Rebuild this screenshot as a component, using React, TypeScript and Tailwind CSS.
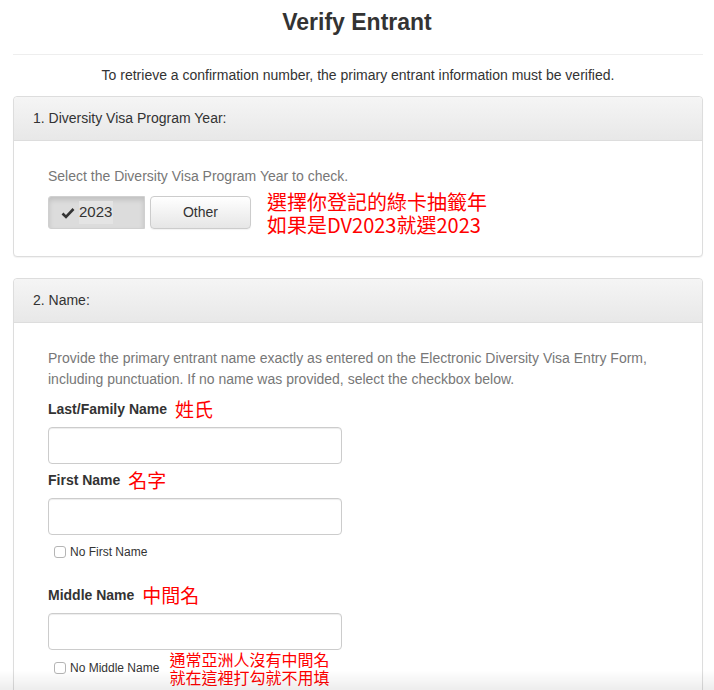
const sans = "font-['Liberation_Sans','Noto_Sans_CJK_TC',Arial,sans-serif]"
const cjk = "font-['Noto_Sans_CJK_TC','Liberation_Sans',sans-serif] text-[#ff0000]"

function Panel({ title, children }: { title: string; children: React.ReactNode }) {
  return (
    <div className="rounded-[4px] border border-[#dddddd] bg-white shadow-[0_1px_1px_rgba(0,0,0,0.05)]">
      <div className="flex h-[44px] items-center rounded-t-[4px] border-b border-[#dddddd] bg-gradient-to-b from-[#f5f5f5] to-[#e8e8e8] pl-[19px] text-[14px] text-[#333333]">
        {title}
      </div>
      {children}
    </div>
  )
}

function Field({ label, note }: { label: string; note: string }) {
  return (
    <>
      <div className="flex h-[24px] items-center gap-[8px]">
        <span className="text-[14px] font-bold text-[#333333]">{label}</span>
        <span className={`${cjk} text-[19px] leading-[24px]`}>{note}</span>
      </div>
      <input
        type="text"
        className="mt-[6px] block h-[37px] w-[294px] rounded-[4px] border border-[#cccccc] bg-white shadow-[inset_0_1px_1px_rgba(0,0,0,0.075)]"
      />
    </>
  )
}

function Check({ label }: { label: string }) {
  return (
    <label className="flex shrink-0 items-center gap-[4px] pl-[6px] text-[12px] text-[#333333]">
      <span className="inline-block h-[12px] w-[12px] rounded-[3px] border border-[#b5b5b5] bg-white" />
      {label}
    </label>
  )
}

export default function App() {
  return (
    <div className={`${sans} relative min-h-[690px] bg-white pt-[8px]`}>
      <h1 className="text-center text-[23px] font-bold leading-[28px] text-[#333333]">Verify Entrant</h1>
      <div className="ml-[13px] w-[690px]">
        <hr className="mt-[18px] border-t border-[#eeeeee]" />
        <p className="mt-[10px] text-center text-[14px] leading-[20px] text-[#333333]">
          To retrieve a confirmation number, the primary entrant information must be verified.
        </p>

        <div className="mt-[11px]">
          <Panel title="1. Diversity Visa Program Year:">
            <div className="pb-[27px] pl-[34px] pt-[25px]">
              <p className="text-[14px] leading-[20px] text-[#777777]">Select the Diversity Visa Program Year to check.</p>
              <div className="mt-[10px] flex h-[33px] items-center">
                <button
                  type="button"
                  className="flex h-[33px] w-[97px] items-center rounded-l-[3px] border border-[#d0d0d0] bg-[#dcdcdc] pl-[12px] text-[15px] text-[#333333] shadow-[inset_0_3px_5px_rgba(0,0,0,0.125)]"
                >
                  <svg width="14" height="12" viewBox="0 0 14 12" className="mr-[4px]">
                    <path d="M1.5 6.5 L5 10 L12.5 2" fill="none" stroke="#333333" strokeWidth="2.6" />
                  </svg>
                  <span className="bg-[#e4e4e4] pr-[1px]">2023</span>
                </button>
                <button
                  type="button"
                  className="ml-[5px] h-[33px] w-[101px] rounded-[4px] border border-[#cccccc] bg-gradient-to-b from-white to-[#e6e6e6] text-[14px] text-[#333333] shadow-[0_1px_1px_rgba(0,0,0,0.05)]"
                >
                  Other
                </button>
                <div className={`${cjk} ml-[16px] text-[20px] leading-[23px]`}>
                  <div>選擇你登記的綠卡抽籤年</div>
                  <div>如果是DV2023就選2023</div>
                </div>
              </div>
            </div>
          </Panel>
        </div>

        <div className="mt-[21px]">
          <Panel title="2. Name:">
            <div className="pb-[40px] pl-[34px] pr-[34px] pt-[25px]">
              <p className="text-[14px] leading-[21px] text-[#777777]">
                Provide the primary entrant name exactly as entered on the Electronic Diversity Visa Entry Form,
                including punctuation. If no name was provided, select the checkbox below.
              </p>
              <div className="mt-[7px]">
                <Field label="Last/Family Name" note="姓氏" />
              </div>
              <div className="mt-[4px]">
                <Field label="First Name" note="名字" />
              </div>
              <div className="mt-[8px] h-[16px]">
                <Check label="No First Name" />
              </div>
              <div className="mt-[24px]">
                <Field label="Middle Name" note="中間名" />
              </div>
              <div className="flex items-center">
                <Check label="No Middle Name" />
                <div className={`${cjk} ml-[10px] text-[16px] leading-[18px]`}>
                  <div>通常亞洲人沒有中間名</div>
                  <div>就在這裡打勾就不用填</div>
                </div>
              </div>
            </div>
          </Panel>
        </div>
      </div>
      <div className="pointer-events-none fixed inset-x-0 bottom-0 h-[20px] bg-gradient-to-b from-transparent to-black/[0.07]" />
    </div>
  )
}
